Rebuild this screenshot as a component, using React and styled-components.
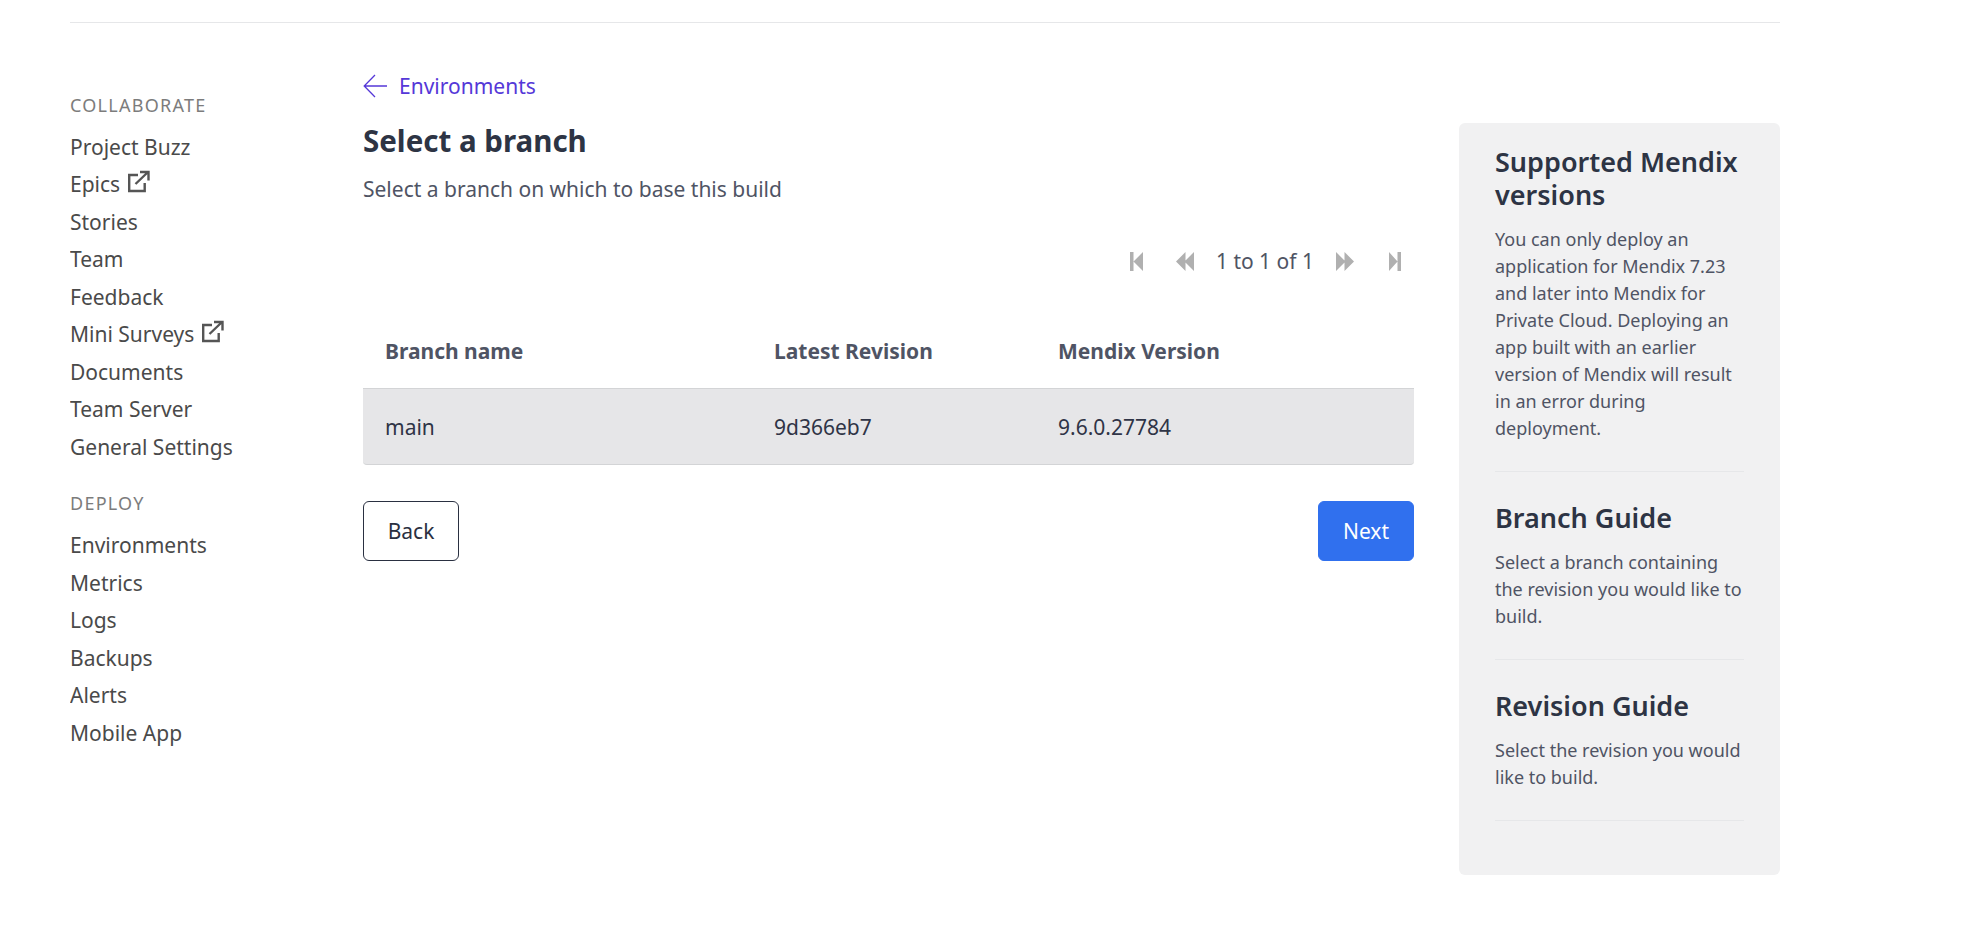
import React from "react";
import styled, { createGlobalStyle } from "styled-components";

const GlobalStyle = createGlobalStyle`
  html, body {
    margin: 0;
    padding: 0;
    background: #fff;
    font-family: "Noto Sans", "Open Sans", sans-serif;
  }
  * {
    box-sizing: border-box;
  }
`;

const Page = styled.div`
  width: 1710px;
  margin-left: 70px;
  height: 952px;
  overflow: hidden;
`;

const TopRule = styled.div`
  height: 23px;
  border-bottom: 1px solid #e6e7e9;
`;

const Columns = styled.div`
  display: flex;
  align-items: flex-start;
`;

const Sidebar = styled.nav`
  width: 293px;
  flex: none;
  padding-top: 70px;
`;

const SectionLabel = styled.div`
  font-size: 18px;
  line-height: 24px;
  letter-spacing: 1.25px;
  color: #7c7c7c;
  margin-bottom: ${(p) => (p.$later ? "12px" : "11px")};
  margin-top: ${(p) => (p.$later ? "25px" : "0")};
`;

const NavItem = styled.a`
  display: flex;
  align-items: center;
  gap: 7px;
  height: 37.5px;
  font-size: 21px;
  color: #4a4a4a;
`;

const Main = styled.main`
  width: 1051px;
  flex: none;
`;

const BackLink = styled.a`
  display: flex;
  align-items: center;
  gap: 11px;
  height: 30px;
  margin-top: 48px;
  font-size: 21px;
  color: #5538d8;
`;

const Title = styled.h1`
  margin: 18px 0 0;
  font-size: 29.5px;
  line-height: 44px;
  font-weight: 700;
  color: #2d3444;
`;

const Subtitle = styled.p`
  margin: 11px 0 0;
  font-size: 21px;
  line-height: 30px;
  color: #4f5464;
`;

const Pager = styled.div`
  display: flex;
  justify-content: flex-end;
  align-items: center;
  height: 30px;
  margin-top: 42px;
  padding-right: 13px;
  font-size: 21px;
  color: #4f5464;
`;

const PagerText = styled.span`
  margin: 0 22px 0 22px;
`;

const PagerIcon = styled.svg`
  width: ${(p) => p.$w}px;
  height: 19px;
  fill: #b0b0b0;
  margin-left: ${(p) => p.$gap || 0}px;
`;

const TableWrap = styled.div`
  margin-top: 41px;
`;

const Row = styled.div`
  display: grid;
  grid-template-columns: 389px 284px 1fr;
  align-items: center;
  padding-left: 22px;
  padding-bottom: ${(p) => (p.$head ? "4px" : "0")};
  font-size: 21px;
  height: ${(p) => (p.$head ? "71px" : "77px")};
  font-weight: ${(p) => (p.$head ? 700 : 400)};
  color: ${(p) => (p.$head ? "#4f5464" : "#2f3446")};
  background: ${(p) => (p.$head ? "#fff" : "#e6e6e8")};
  border-top: ${(p) => (p.$head ? "none" : "1px solid #d3d4d6")};
  border-bottom: ${(p) => (p.$head ? "none" : "1px solid #d3d4d6")};
  border-radius: ${(p) => (p.$head ? "0" : "0 0 4px 4px")};
`;

const Actions = styled.div`
  display: flex;
  justify-content: space-between;
  margin-top: 36px;
`;

const Button = styled.button`
  width: 96px;
  height: 60px;
  padding: 0;
  border-radius: 6px;
  font-family: inherit;
  font-size: 21px;
  border: 1px solid ${(p) => (p.$primary ? "#3070ee" : "#2a3041")};
  background: ${(p) => (p.$primary ? "#3070ee" : "#fff")};
  color: ${(p) => (p.$primary ? "#fff" : "#2a3041")};
`;

const Aside = styled.aside`
  width: 321px;
  height: 752px;
  flex: none;
  margin: 100px 0 0 45px;
  padding: 22px 36px 0;
  background: #f1f1f2;
  border-radius: 6px;
`;

const AsideBlock = styled.section`
  padding-bottom: 29px;
  margin-bottom: 29px;
  border-bottom: 1px solid #e6e7e9;
`;

const AsideTitle = styled.h2`
  margin: 0 0 15px;
  font-size: 27px;
  line-height: 33px;
  font-weight: 600;
  color: #2d3444;
`;

const AsideText = styled.p`
  margin: 0;
  font-size: 18px;
  line-height: 27px;
  color: #4f5464;
`;

const IconWrap = styled.svg`
  flex: none;
  margin-top: -5px;
`;

const ExternalIcon = () => (
  <IconWrap width="23" height="23" viewBox="0 0 23 23" fill="none" stroke="#555" strokeWidth="2.4">
    <path d="M11 5H2.200v16h15.500v-8" />
    <path d="M8.500 14 20.500 2.500M13 2h8.500v8.500" />
  </IconWrap>
);

const ArrowLeft = () => (
  <svg width="25" height="24" viewBox="0 0 25 24" fill="none" stroke="#5538d8" strokeWidth="1.3">
    <path d="M24 12H1.500M12 1 1.200 12 12 23" />
  </svg>
);

const FirstIcon = () => (
  <PagerIcon $w={13} viewBox="0 0 13 19">
    <path d="M0 0h3.500v19H0zM13 0v19L3.500 9.500z" />
  </PagerIcon>
);

const PrevIcon = () => (
  <PagerIcon $w={18} $gap={33} viewBox="0 0 18 19">
    <path d="M9.500 0v19L0 9.500zM18 0v19L8.500 9.500z" />
  </PagerIcon>
);

const NextIcon = () => (
  <PagerIcon $w={18} viewBox="0 0 18 19">
    <path d="M0 0v19l9.500-9.500zM8.500 0v19L18 9.500z" />
  </PagerIcon>
);

const LastIcon = () => (
  <PagerIcon $w={12} $gap={35} viewBox="0 0 12 19">
    <path d="M0 0v19l8.500-9.500zM8.500 0H12v19H8.500z" />
  </PagerIcon>
);

const collaborate = [
  { label: "Project Buzz" },
  { label: "Epics", external: true },
  { label: "Stories" },
  { label: "Team" },
  { label: "Feedback" },
  { label: "Mini Surveys", external: true },
  { label: "Documents" },
  { label: "Team Server" },
  { label: "General Settings" },
];

const deploy = ["Environments", "Metrics", "Logs", "Backups", "Alerts", "Mobile App"];

export default function App() {
  return (
    <Page>
      <GlobalStyle />
      <TopRule />
      <Columns>
        <Sidebar>
          <SectionLabel>COLLABORATE</SectionLabel>
          {collaborate.map((item) => (
            <NavItem key={item.label}>
              {item.label}
              {item.external && <ExternalIcon />}
            </NavItem>
          ))}
          <SectionLabel $later>DEPLOY</SectionLabel>
          {deploy.map((label) => (
            <NavItem key={label}>{label}</NavItem>
          ))}
        </Sidebar>
        <Main>
          <BackLink>
            <ArrowLeft />
            Environments
          </BackLink>
          <Title>Select a branch</Title>
          <Subtitle>Select a branch on which to base this build</Subtitle>
          <Pager>
            <FirstIcon />
            <PrevIcon />
            <PagerText>1 to 1 of 1</PagerText>
            <NextIcon />
            <LastIcon />
          </Pager>
          <TableWrap>
            <Row $head>
              <span>Branch name</span>
              <span>Latest Revision</span>
              <span>Mendix Version</span>
            </Row>
            <Row>
              <span>main</span>
              <span>9d366eb7</span>
              <span>9.6.0.27784</span>
            </Row>
          </TableWrap>
          <Actions>
            <Button>Back</Button>
            <Button $primary>Next</Button>
          </Actions>
        </Main>
        <Aside>
          <AsideBlock>
            <AsideTitle>Supported Mendix versions</AsideTitle>
            <AsideText>
              You can only deploy an application for Mendix 7.23 and later into Mendix for Private
              Cloud. Deploying an app built with an earlier version of Mendix will result in an
              error during deployment.
            </AsideText>
          </AsideBlock>
          <AsideBlock>
            <AsideTitle>Branch Guide</AsideTitle>
            <AsideText>Select a branch containing the revision you would like to build.</AsideText>
          </AsideBlock>
          <AsideBlock>
            <AsideTitle>Revision Guide</AsideTitle>
            <AsideText>Select the revision you would like to build.</AsideText>
          </AsideBlock>
        </Aside>
      </Columns>
    </Page>
  );
}
